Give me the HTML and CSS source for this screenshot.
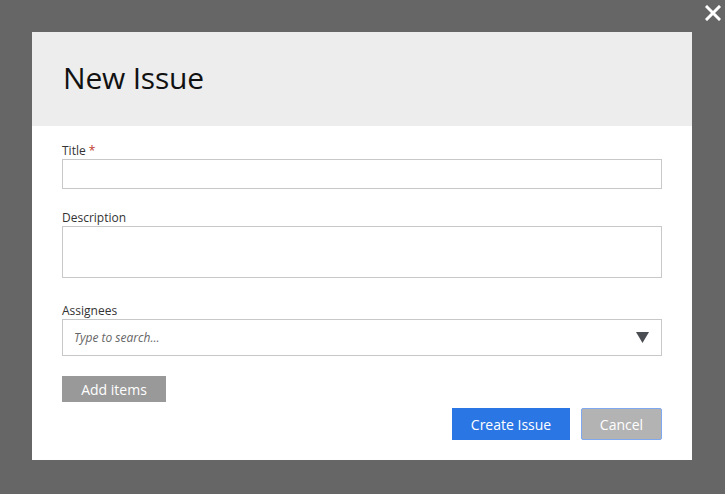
FILE: index.html
```html
<!DOCTYPE html>
<html>
<head>
<meta charset="utf-8">
<link rel="stylesheet" href="styles.css">
</head>
<body>
<div class="overlay">
  <button class="close" aria-label="Close">
    <svg width="16" height="16" viewBox="0 0 16 16"><path d="M2 2 L14 14 M14 2 L2 14" stroke="#fff" stroke-width="3" stroke-linecap="square"/></svg>
  </button>
  <div class="dialog">
    <div class="dialog-header"><h1>New Issue</h1></div>
    <div class="dialog-body">
      <div class="field">
        <label>Title <span class="req">*</span></label>
        <div class="input"></div>
      </div>
      <div class="field">
        <label>Description</label>
        <div class="textarea"></div>
      </div>
      <div class="field">
        <label>Assignees</label>
        <div class="select">
          <span class="placeholder">Type to search...</span>
          <svg class="caret" width="13" height="11" viewBox="0 0 13 11"><path d="M0 0 H13 L6.5 11 Z" fill="#4a4d52"/></svg>
        </div>
      </div>
      <div class="add-row"><button class="btn-add">Add items</button></div>
      <div class="actions">
        <button class="btn-primary">Create Issue</button>
        <button class="btn-cancel">Cancel</button>
      </div>
    </div>
  </div>
</div>
</body>
</html>
```
FILE: styles.css
```css
html, body {
  margin: 0;
  padding: 0;
  width: 725px;
  height: 494px;
  overflow: hidden;
  font-family: "Open Sans", "Liberation Sans", sans-serif;
}
.overlay {
  position: relative;
  width: 725px;
  height: 494px;
  background: #666666;
  padding: 32px 33px 34px 32px;
  box-sizing: border-box;
}
.close {
  position: absolute;
  top: 4px;
  right: 3px;
  width: 18px;
  height: 18px;
  padding: 1px;
  border: 0;
  background: none;
  display: flex;
  align-items: center;
  justify-content: center;
}
.dialog {
  width: 660px;
  height: 428px;
  background: #fff;
  display: flex;
  flex-direction: column;
}
.dialog-header {
  background: #ededed;
  height: 94px;
  box-sizing: border-box;
  padding: 0 31px;
  display: flex;
  align-items: center;
}
.dialog-header h1 {
  margin: 0;
  font-size: 30px;
  font-weight: 400;
  color: #111;
  letter-spacing: -0.2px;
  line-height: 1;
  padding-bottom: 2px;
}
.dialog-body {
  padding: 16px 30px 0 30px;
  display: flex;
  flex-direction: column;
}
.field {
  display: flex;
  flex-direction: column;
  margin-bottom: 20px;
}
.field label {
  font-size: 12px;
  color: #333;
  line-height: 15px;
  padding-top: 1px;
  margin-bottom: 1px;
}
.req { color: #c0392b; }
.input, .textarea, .select {
  border: 1px solid #c8c8c8;
  box-sizing: border-box;
  background: #fff;
}
.input { height: 30px; }
.textarea { height: 52px; margin-bottom: 4px; }
.select {
  height: 37px;
  display: flex;
  align-items: center;
  justify-content: space-between;
  padding: 0 12px 0 11px;
}
.placeholder {
  font-style: italic;
  font-size: 12px;
  color: #666;
}
.caret { display: block; }
.add-row { display: flex; }
.btn-add {
  width: 104px;
  height: 26px;
  background: #999999;
  color: #fff;
  border: 0;
  font-family: inherit;
  font-size: 14px;
  padding: 0;
}
.actions {
  display: flex;
  justify-content: flex-end;
  gap: 11px;
  margin-top: 6px;
}
.btn-primary {
  width: 118px;
  height: 32px;
  background: #2b76e5;
  color: #fff;
  border: 0;
  font-family: inherit;
  font-size: 14px;
  padding: 0;
}
.btn-cancel {
  width: 81px;
  height: 32px;
  background: #b3b3b3;
  color: #fff;
  border: 1px solid #7fa8ee;
  border-radius: 2px;
  font-family: inherit;
  font-size: 14px;
  padding: 0;
}
```
